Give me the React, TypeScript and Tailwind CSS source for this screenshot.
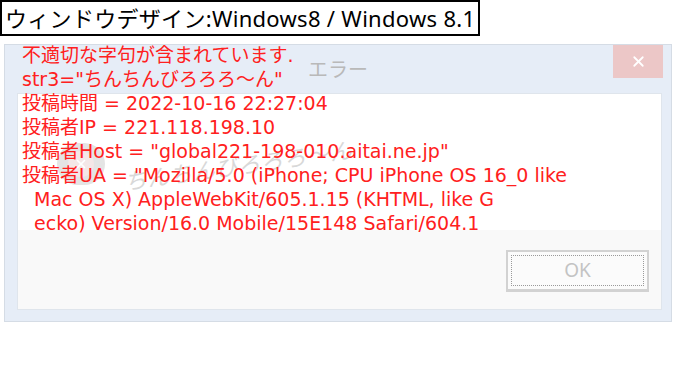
import { X } from "lucide-react";

const lines = [
  "不適切な字句が含まれています.",
  'str3="ちんちんびろろろ〜ん"',
  "投稿時間 = 2022-10-16 22:27:04",
  "投稿者IP = 221.118.198.10",
  '投稿者Host = "global221-198-010.aitai.ne.jp"',
  '投稿者UA = "Mozilla/5.0 (iPhone; CPU iPhone OS 16_0 like',
  "  Mac OS X) AppleWebKit/605.1.15 (KHTML, like G",
  "  ecko) Version/16.0 Mobile/15E148 Safari/604.1",
];

export default function App() {
  return (
    <div className="w-[680px] h-[368px] bg-white overflow-hidden font-['DejaVu_Sans','Noto_Sans_CJK_JP',sans-serif]">
      {/* caption */}
      <div className="inline-block h-[36px] border-2 border-black px-[3px] text-[22px] leading-[32px] text-black whitespace-nowrap font-['Noto_Sans','Noto_Sans_CJK_JP',sans-serif] tracking-[0.3px]">
        ウィンドウデザイン:Windows8 / Windows 8.1
      </div>

      {/* dialog */}
      <div className="relative mt-[8px] ml-[4px] w-[668px] h-[278px] bg-[#e6edf7] border border-[#d5dce5] flex flex-col">
        <div className="h-[48px] flex items-start">
          <div className="flex-1 flex justify-center pt-[11px] pl-[58px]">
            <span className="text-[20px] leading-[26px] text-[#b9b9b9] font-['Noto_Sans_CJK_JP',sans-serif]">エラー</span>
          </div>
          <div className="w-[50px] h-[33px] mr-[8px] bg-[#ecc7c7] flex items-center justify-center">
            <X className="w-[17px] h-[17px] text-white" strokeWidth={2.5} />
          </div>
        </div>

        <div className="ml-[12px] mr-[9px] flex-1 mb-[11px] border border-[#dfe5ec] flex flex-col">
          <div className="h-[136px] bg-white" />
          <div className="flex-1 bg-[#f9f9f9] flex justify-end items-start pt-[20px] pr-[12px]">
            <div className="w-[143px] h-[42px] border-2 border-b-[3px] border-[#d2d2d2] bg-[#fbfbfb] p-[3px]">
              <div className="w-full h-full border border-dotted border-[#9a9a9a] flex items-center justify-center">
                <span className="text-[19px] leading-none text-[#c3c3c3] font-['Noto_Sans',sans-serif]">OK</span>
              </div>
            </div>
          </div>
        </div>

        {/* watermark */}
        <div className="absolute left-[52px] top-[98px] flex items-center gap-[18px] opacity-80 pointer-events-none">
          <div className="w-[48px] h-[42px] rounded-full bg-[#dedede] flex items-center justify-center">
            <div className="w-[26px] h-[26px] rounded-full bg-[#f2e2e2] flex items-center justify-center">
              <X className="w-[14px] h-[14px] text-white" strokeWidth={3} />
            </div>
          </div>
          <span className="text-[22px] italic text-[#cfcfcf] -rotate-[8deg] tracking-[1px] font-['Noto_Sans_CJK_JP',sans-serif]">ちんちんびろろろ〜ん</span>
        </div>

        {/* error text */}
        <div className="absolute left-[17px] top-[-2px] text-[19px] leading-[24px] text-[#ff2020] whitespace-pre">
          {lines.map((l, i) => (
            <div key={i}>{l}</div>
          ))}
        </div>
      </div>
    </div>
  );
}
